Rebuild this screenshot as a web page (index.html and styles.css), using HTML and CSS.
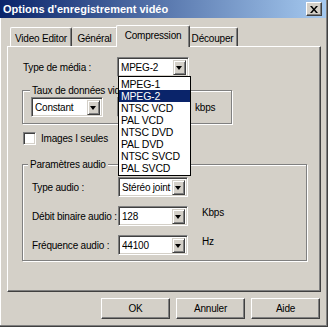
FILE: index.html
```html
<!DOCTYPE html>
<html lang="fr">
<head>
<meta charset="utf-8">
<title>Options d'enregistrement vidéo</title>
<link rel="stylesheet" href="styles.css">
</head>
<body>
<div class="window">
  <div class="titlebar">
    <span class="title">Options d'enregistrement vidéo</span>
    <span class="close"><svg width="8" height="7" viewBox="0 0 8 7"><path d="M0 0h2l2 2.5L6 0h2L5 3.5 8 7H6L4 4.5 2 7H0l3-3.5z" fill="#000"/></svg></span>
  </div>
  <div class="client">
    <div class="tabs">
      <div class="tab t-video">Video Editor</div>
      <div class="tab t-gen">Général</div>
      <div class="tab t-comp active">Compression</div>
      <div class="tab t-dec">Découper</div>
    </div>
    <div class="panel">
      <div class="media-row">
        <span class="lbl-media">Type de média :</span>
        <div class="combo c-media">
          <span class="val">MPEG-2</span><span class="drop"></span>
          <ul class="list">
            <li>MPEG-1</li>
            <li class="sel">MPEG-2</li>
            <li>NTSC VCD</li>
            <li>PAL VCD</li>
            <li>NTSC DVD</li>
            <li>PAL DVD</li>
            <li>NTSC SVCD</li>
            <li>PAL SVCD</li>
          </ul>
        </div>
      </div>
      <fieldset class="group g-rate">
        <legend>Taux de données vidéo</legend>
        <div class="rate-row">
          <div class="combo c-rate"><span class="val">Constant</span><span class="drop"></span></div>
          <div class="edit"></div>
          <span class="unit-kbps">kbps</span>
        </div>
      </fieldset>
      <div class="check-row"><span class="checkbox"></span><span>Images I seules</span></div>
      <fieldset class="group g-audio">
        <legend>Paramètres audio</legend>
        <div class="audio-grid">
          <span class="alabel">Type audio :</span>
          <div class="combo c-audio"><span class="val">Stéréo joint</span><span class="drop"></span></div>
          <span class="unit"></span>
          <span class="alabel">Débit binaire audio :</span>
          <div class="combo c-audio"><span class="val">128</span><span class="drop"></span></div>
          <span class="unit">Kbps</span>
          <span class="alabel">Fréquence audio :</span>
          <div class="combo c-audio"><span class="val">44100</span><span class="drop"></span></div>
          <span class="unit">Hz</span>
        </div>
      </fieldset>
    </div>
    <div class="buttons">
      <div class="button">OK</div>
      <div class="button">Annuler</div>
      <div class="button">Aide</div>
    </div>
  </div>
</div>
</body>
</html>
```
FILE: styles.css
```css
* { box-sizing: border-box; }
html, body { margin: 0; padding: 0; background: #fff; }
body {
  font-family: "Liberation Sans", Arial, sans-serif;
  font-size: 10px;
  letter-spacing: -0.2px;
  color: #000;
  white-space: nowrap;
}
.window {
  width: 328px;
  height: 327px;
  background: #d4d0c8;
  border-right: 1px solid #404040;
  border-bottom: 1px solid #404040;
  box-shadow: inset -1px -1px 0 #808080, inset 1px 0 0 #fff;
  display: flex;
  flex-direction: column;
}
.titlebar {
  height: 18px;
  margin-right: 1px;
  background: linear-gradient(to right, #0a246a, #a6caf0);
  display: flex;
  align-items: center;
  justify-content: space-between;
  padding: 0 4px 0 3px;
}
.title {
  color: #fff;
  font-weight: bold;
  font-size: 11px;
  letter-spacing: 0;
}
.close {
  width: 16px;
  height: 14px;
  background: #d4d0c8;
  border: 1px solid;
  border-color: #fff #404040 #404040 #fff;
  box-shadow: inset -1px -1px 0 #808080;
  display: flex;
  align-items: center;
  justify-content: center;
}
.client {
  padding: 7px 6px 0 7px;
  display: flex;
  flex-direction: column;
}
.tabs {
  display: flex;
  align-items: flex-end;
  height: 21px;
  padding-left: 3px;
  position: relative;
  z-index: 1;
}
.tab {
  height: 19px;
  border-top: 1px solid #fff;
  border-left: 1px solid #fff;
  border-right: 1px solid #404040;
  box-shadow: inset -1px 0 0 #808080;
  border-radius: 2px 2px 0 0;
  display: flex;
  align-items: center;
  justify-content: center;
  padding-top: 2px;
}
.t-video { width: 62px; }
.t-gen { width: 46px; border-left: none; }
.t-comp { width: 70px; }
.t-dec { width: 50px; border-left: none; }
.tab.active {
  width: 74px;
  height: 22px;
  margin: 0 -2px -1px -2px;
  background: #d4d0c8;
  padding-top: 0;
  padding-bottom: 2px;
  position: relative;
  z-index: 2;
}
.panel {
  height: 246px;
  border-top: 1px solid #fff;
  border-left: 1px solid #fff;
  border-right: 1px solid #404040;
  border-bottom: 1px solid #404040;
  box-shadow: inset -1px -1px 0 #808080;
  padding: 10px 0 0 14px;
  display: flex;
  flex-direction: column;
  align-items: flex-start;
}
.media-row {
  display: flex;
  align-items: center;
  height: 20px;
  position: relative;
  z-index: 5;
}
.lbl-media { width: 95px; padding-left: 1px; }
.combo {
  position: relative;
  height: 20px;
  background: #fff;
  border: 1px solid;
  border-color: #808080 #fff #fff #808080;
  box-shadow: inset 1px 1px 0 #404040, inset -1px -1px 0 #d4d0c8;
  display: flex;
  align-items: center;
  padding: 2px 2px 2px 3px;
}
.combo .val { flex: 1; overflow: hidden; }
.drop {
  width: 13px;
  height: 15px;
  flex: none;
  background: #d4d0c8;
  border: 1px solid;
  border-color: #d4d0c8 #404040 #404040 #d4d0c8;
  box-shadow: inset 1px 1px 0 #fff, inset -1px -1px 0 #808080;
  position: relative;
}
.drop::after {
  content: "";
  position: absolute;
  left: 2px;
  top: 5px;
  border-left: 3.5px solid transparent;
  border-right: 3.5px solid transparent;
  border-top: 4px solid #000;
}
.c-media { width: 72px; }
.list {
  position: absolute;
  left: 0;
  top: 18px;
  width: 73px;
  margin: 0;
  padding: 1px 0;
  list-style: none;
  background: #fff;
  border: 1px solid #000;
  font-size: 10.5px;
  letter-spacing: -0.2px;
}
.list li {
  height: 12px;
  line-height: 12px;
  padding-left: 2px;
}
.list li.sel { background: #0a246a; color: #fff; }
.group {
  margin: 0;
  min-width: 0;
  border: 1px solid #808080;
  box-shadow: inset 1px 1px 0 #fff, 1px 1px 0 #fff;
  padding: 0;
}
.group legend {
  margin-left: 7px;
  padding: 0 2px;
  line-height: 13px;
  background: #d4d0c8;
  position: relative;
}
.g-rate { width: 210px; margin-top: 7px; }
.g-audio legend { margin-left: 5px; }
.rate-row { display: flex; align-items: center; padding: 0 0 6px 8px; }
.c-rate { width: 72px; }
.edit {
  width: 70px;
  height: 20px;
  margin-left: 14px;
  background: #fff;
  border: 1px solid;
  border-color: #808080 #fff #fff #808080;
  box-shadow: inset 1px 1px 0 #404040;
}
.unit-kbps { margin-left: 8px; }
.check-row {
  display: flex;
  align-items: center;
  gap: 5px;
  margin-top: 8px;
  padding-left: 1px;
  height: 13px;
}
.checkbox {
  width: 13px;
  height: 13px;
  background: #fff;
  border: 1px solid;
  border-color: #808080 #fff #fff #808080;
  box-shadow: inset 1px 1px 0 #404040, inset -1px -1px 0 #d4d0c8;
}
.g-audio { width: 285px; margin-top: 13px; }
.audio-grid {
  display: grid;
  grid-template-columns: 86px 70px auto;
  grid-auto-rows: 20px;
  row-gap: 9px;
  align-items: center;
  padding: 6px 0 5px 9px;
}
.c-audio { width: 70px; }
.unit { margin-left: 14px; align-self: start; margin-top: 1px; }
.buttons {
  display: flex;
  justify-content: flex-end;
  gap: 6px;
  margin-top: 6px;
  padding-right: 1px;
}
.button {
  width: 69px;
  height: 21px;
  border: 1px solid;
  border-color: #fff #404040 #404040 #fff;
  box-shadow: inset -1px -1px 0 #808080;
  display: flex;
  align-items: center;
  justify-content: center;
}
```
